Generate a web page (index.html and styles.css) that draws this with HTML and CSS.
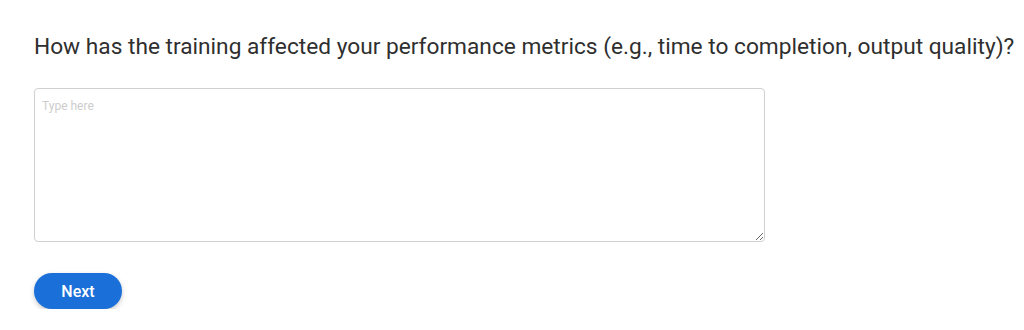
FILE: index.html
```html
<!DOCTYPE html>
<html lang="en">
<head>
<meta charset="utf-8">
<title>Survey question</title>
<link rel="stylesheet" href="styles.css">
</head>
<body>
<main class="question">
  <h1 class="question-title">How has the training affected your performance metrics (e.g., time to completion, output quality)?</h1>
  <textarea class="answer" placeholder="Type here"></textarea>
  <div class="actions">
    <button class="btn-next" type="button">Next</button>
  </div>
</main>
</body>
</html>
```

FILE: styles.css
```css
html, body {
  margin: 0;
  padding: 0;
  background: #ffffff;
}
body {
  font-family: Roboto, "Liberation Sans", Arial, sans-serif;
  color: #2f2f2f;
}
.question {
  padding: 31px 34px 0 34px;
  display: flex;
  flex-direction: column;
  align-items: flex-start;
}
.question-title {
  margin: 0;
  font-size: 22.7px;
  font-weight: 400;
  line-height: 32px;
  white-space: nowrap;
  color: #2f2f2f;
}
.answer {
  margin-top: 25px;
  width: 731px;
  height: 154px;
  box-sizing: border-box;
  border: 1px solid #d0d0d0;
  border-radius: 4px;
  padding: 10px 7px;
  font-family: Roboto, "Liberation Sans", Arial, sans-serif;
  font-size: 12px;
  color: #333;
  resize: vertical;
  outline: none;
}
.answer::placeholder {
  color: #cdcdcd;
}
.actions {
  margin-top: 31px;
}
.btn-next {
  width: 88px;
  height: 36px;
  border: none;
  border-radius: 18px;
  background: #1a6fd8;
  color: #ffffff;
  font-family: Roboto, "Liberation Sans", Arial, sans-serif;
  font-size: 16px;
  font-weight: 500;
  box-shadow: 0 2px 5px rgba(0, 0, 0, 0.22);
  cursor: pointer;
}
```
